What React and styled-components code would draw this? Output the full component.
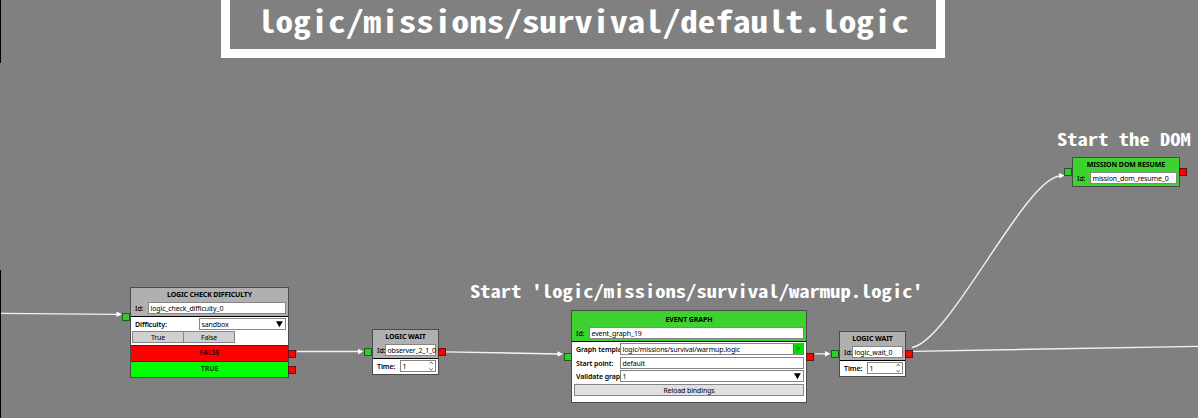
import React from "react";
import styled, { createGlobalStyle } from "styled-components";

const GlobalStyle = createGlobalStyle`
  body { margin: 0; background: #808080; }
  * { box-sizing: border-box; }
`;

const Canvas = styled.main`
  position: relative;
  width: 1198px;
  height: 418px;
  overflow: hidden;
  background: #808080;
  font-family: "Noto Sans", "Open Sans", sans-serif;
  font-size: 7px;
  line-height: 9px;
  color: #000;
`;

const Banner = styled.h1`
  position: absolute;
  left: 221px;
  top: -20px;
  width: 724px;
  height: 78px;
  margin: 0;
  border: 9px solid #fff;
  padding-top: 13px;
  display: flex;
  justify-content: center;
  color: #fff;
  font: bold 30px/36px "Noto Sans Mono CJK SC", "DejaVu Sans Mono", monospace;
  white-space: pre;
`;

const BannerText = styled.span`
  transform: scaleX(1.173);
`;

const Caption = styled.div`
  position: absolute;
  left: ${(p) => p.$x}px;
  top: ${(p) => p.$y}px;
  color: #fff;
  font: bold 17.5px/22px "Noto Sans Mono CJK SC", "DejaVu Sans Mono", monospace;
  transform: scaleX(1.176);
  transform-origin: left;
  white-space: pre;
`;

const Edge = styled.div`
  position: absolute;
  left: 0;
  top: ${(p) => p.$y}px;
  width: 1px;
  height: ${(p) => p.$h}px;
  background: #000;
`;

const Wires = styled.svg`
  position: absolute;
  inset: 0;
`;

const NodeBox = styled.section`
  position: absolute;
  left: ${(p) => p.$x}px;
  top: ${(p) => p.$y}px;
  width: ${(p) => p.$w}px;
  height: ${(p) => p.$h}px;
  border: 1px solid #4b4b4b;
  background: #fff;
`;

const Header = styled.header`
  height: ${(p) => p.$h}px;
  padding: 2px 2px 0 4px;
  background: ${(p) => (p.$green ? "#3dd22f" : "#b0b0b0")};
  border-bottom: ${(p) => (p.$line ? "1px solid #000" : "0")};
`;

const Title = styled.h2`
  margin: 0 0 0 -2px;
  height: ${(p) => p.$h || 11}px;
  padding-top: ${(p) => p.$pt || 0}px;
  font-size: 7px;
  line-height: 9px;
  font-weight: 700;
  text-align: center;
  white-space: nowrap;
  letter-spacing: ${(p) => p.$ls || -0.1}px;
`;

const Row = styled.div`
  display: flex;
  height: 12px;
  margin-bottom: ${(p) => p.$gap || 0}px;
`;

const Label = styled.span`
  flex: none;
  width: ${(p) => p.$w}px;
  overflow: hidden;
  white-space: nowrap;
  line-height: 13px;
  font-weight: ${(p) => (p.$bold ? 600 : 500)};
  letter-spacing: -0.1px;
`;

const Field = styled.div`
  flex: 1;
  min-width: 0;
  display: flex;
  justify-content: space-between;
  align-items: center;
  border: 1px solid #858585;
  background: #fff;
  padding-left: 1.5px;
  white-space: nowrap;
  letter-spacing: ${(p) => p.$ls || -0.13}px;
`;

const Body = styled.div`
  padding: ${(p) => p.$pad || "2px 2px 0 4px"};
`;

const Button = styled.div`
  width: ${(p) => p.$w}px;
  height: 12px;
  margin-left: ${(p) => p.$ml || 0}px;
  border: 1px solid #858585;
  background: ${(p) => p.$bg || "#d0d0d0"};
  text-align: center;
  line-height: 11px;
  letter-spacing: -0.12px;
`;

const Go = styled.span`
  align-self: stretch;
  width: 10px;
  background: #00e000;
  border-left: 1px solid #3f8b3f;
  text-align: center;
  line-height: 10px;
`;

const Outcome = styled.div`
  height: ${(p) => p.$h}px;
  background: ${(p) => p.$bg};
  border-top: 1px solid #5b2000;
  color: ${(p) => p.$fg};
  text-align: center;
  font-weight: 700;
  line-height: ${(p) => p.$lh}px;
  letter-spacing: -0.05px;
`;

const Port = styled.i`
  position: absolute;
  left: ${(p) => p.$x}px;
  top: ${(p) => p.$y}px;
  width: 8px;
  height: 8px;
  background: ${(p) => (p.$out ? "#ff0000" : "#34cb32")};
  border: 1px solid ${(p) => (p.$out ? "#681010" : "#1c5c1c")};
`;

const Drop = () => (
  <svg width="10" height="10" viewBox="0 0 10 10"><path d="M1 2.2h6.8L4.4 8.2z" /></svg>
);

const Spinner = () => (
  <svg width="7" height="10" viewBox="0 0 7 10" fill="none" stroke="#333" strokeWidth=".8">
    <path d="M1.5 2.8 3.2 1.2 4.9 2.8M1.5 7.4 3.2 9 4.9 7.4" />
  </svg>
);

function WaitNode({ x, y, id, ls }) {
  return (
    <NodeBox $x={x} $y={y} $w={67} $h={46}>
      <Header $h={29} $line>
        <Title $h={12}>LOGIC WAIT</Title>
        <Row><Label $w={8}>Id:</Label><Field $ls={ls}>{id}</Field></Row>
      </Header>
      <Body $pad="1px 2px 0 4px">
        <Row><Label $w={23} $bold>Time:</Label><Field>1<Spinner /></Field></Row>
      </Body>
    </NodeBox>
  );
}

export default function App() {
  return (
    <Canvas>
      <GlobalStyle />
      <Edge $y={0} $h={63} />
      <Edge $y={270} $h={148} />
      <Banner><BannerText>logic/missions/survival/default.logic</BannerText></Banner>
      <Caption $x={1057} $y={128}>Start the DOM</Caption>
      <Caption $x={470} $y={280}>Start 'logic/missions/survival/warmup.logic'</Caption>

      <Wires width="1198" height="418" fill="none" stroke="#f2f2f2" strokeWidth="1.35">
        <path d="M1 313.3 117 314.3M297 351.5H360M446 351.8 559 354M815 353.8H826M913 351.3 1198 346.3" />
        <path d="M912 347.500C950 341 1025 178 1060 176" />
        <g fill="#fff" stroke="none">
          <path d="M116.500 311.600 122 314.300 116.500 317z" />
          <path d="M358 348.800 363.500 351.500 358 354.200z" />
          <path d="M557.500 351.300 563 354 557.500 356.700z" />
          <path d="M825 351 830.500 353.700 825 356.400z" />
          <path d="M1059 173 1064.500 175.500 1059.500 178.500z" />
        </g>
      </Wires>

      <NodeBox $x={130} $y={287} $w={159} $h={91}>
        <Header $h={29} $line>
          <Title $h={12} $ls={-0.16}>LOGIC CHECK DIFFICULTY</Title>
          <Row><Label $w={13}>Id:</Label><Field>logic_check_difficulty_0</Field></Row>
        </Header>
        <Body $pad="1px 2px 0 4px">
          <Row $gap={1}><Label $w={64} $bold>Difficulty:</Label><Field>sandbox<Drop /></Field></Row>
          <Row $gap={2}><Button $w={52} $ml={-3}>True</Button><Button $w={52} $ml={-1}>False</Button></Row>
        </Body>
        <Outcome $h={16} $lh={14} $bg="#ff0000" $fg="#4c0000">FALSE</Outcome>
        <Outcome $h={16} $lh={13} $bg="#00ff00" $fg="#004c00">TRUE</Outcome>
      </NodeBox>
      <Port $x={122} $y={313} />
      <Port $x={288} $y={350} $out />
      <Port $x={288} $y={366} $out />

      <WaitNode x={372} y={329} id="observer_2_1_0" ls={-0.15} />
      <Port $x={364} $y={348} />
      <Port $x={438} $y={348} $out />

      <NodeBox $x={571} $y={310} $w={236} $h={93}>
        <Header $h={31} $green $line>
          <Title $h={14} $pt={2}>EVENT GRAPH</Title>
          <Row><Label $w={13}>Id:</Label><Field>event_graph_19</Field></Row>
        </Header>
        <Body $pad="1px 2px 0 4px">
          <Row $gap={2}><Label $w={44} $bold>Graph templa</Label><Field>logic/missions/survival/warmup.logic<Go>&gt;</Go></Field></Row>
          <Row $gap={1}><Label $w={44} $bold>Start point:</Label><Field>default</Field></Row>
          <Row $gap={2}><Label $w={44} $bold>Validate grap</Label><Field>1<Drop /></Field></Row>
          <Row><Button $w={230} $ml={-2} $bg="#e0e0e0">Reload bindings</Button></Row>
        </Body>
      </NodeBox>
      <Port $x={564} $y={353} />
      <Port $x={806} $y={353} $out />

      <WaitNode x={839} y={331} id="logic_wait_0" />
      <Port $x={831} $y={350} />
      <Port $x={905} $y={350} $out />

      <NodeBox $x={1072} $y={157} $w={108} $h={30}>
        <Header $h={28} $green>
          <Title $h={12}>MISSION DOM RESUME</Title>
          <Row><Label $w={13}>Id:</Label><Field>mission_dom_resume_0</Field></Row>
        </Header>
      </NodeBox>
      <Port $x={1064} $y={168} />
      <Port $x={1179} $y={168} $out />
    </Canvas>
  );
}
